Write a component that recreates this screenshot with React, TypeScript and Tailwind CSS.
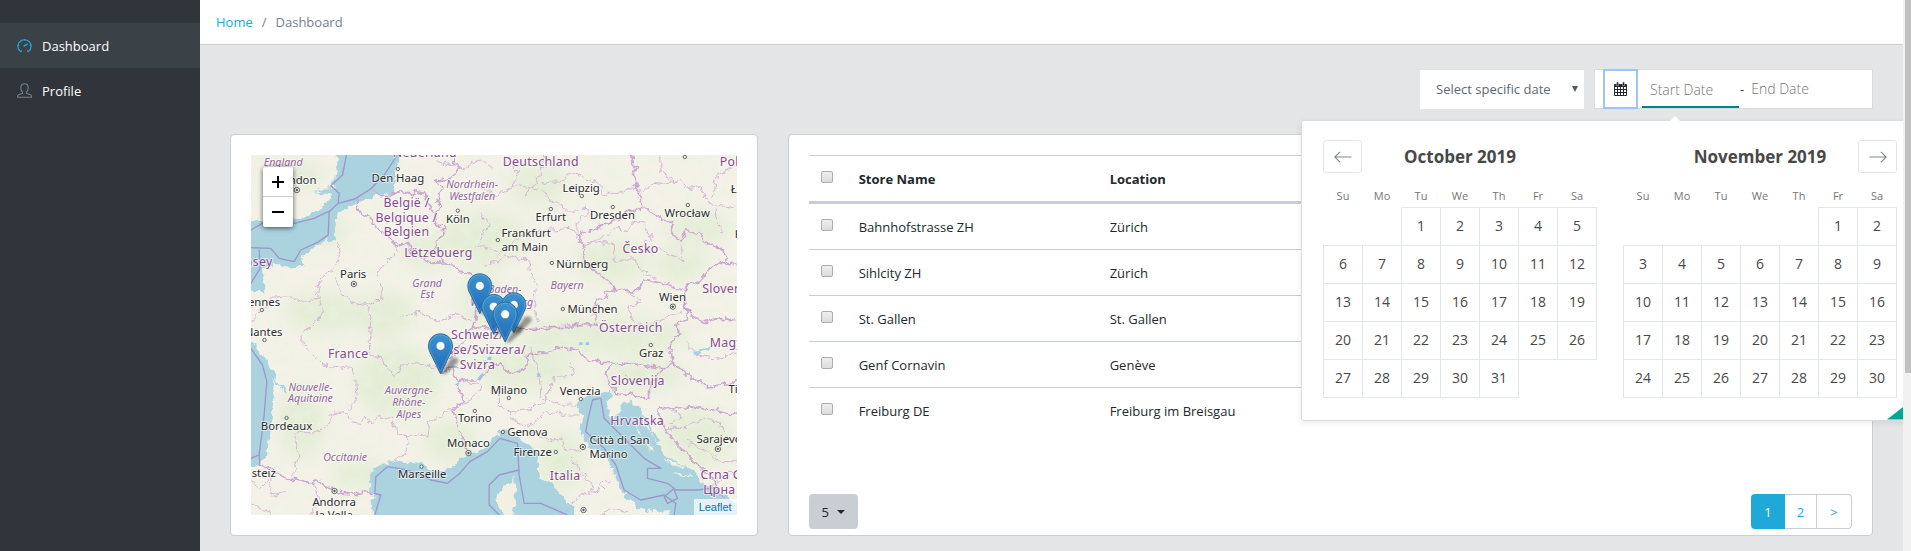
import React from "react";

type Kind = "country" | "region" | "city";
type Anchor = "start" | "middle" | "end";
type Label = [string, number, number, Kind, Anchor?];

const labels: Label[] = [
  ["Nederland", 522, 5, "country"],
  ["England", 97, 33, "region"],
  ["London", 197, 87, "city", "end"],
  ["Den Haag", 441, 80, "city"],
  ["Nordrhein-", 664, 100, "region"],
  ["Westfalen", 664, 135, "region"],
  ["België /", 467, 155, "country"],
  ["Belgique /", 467, 200, "country"],
  ["Belgien", 467, 243, "country"],
  ["Lëtzebuerg", 563, 307, "country"],
  ["Köln", 621, 204, "city"],
  ["Paris", 307, 369, "city"],
  ["Guernsey", 65, 332, "country", "end"],
  ["Rennes", 88, 453, "city", "end"],
  ["Grand", 529, 395, "region"],
  ["Est", 529, 430, "region"],
  ["Nantes", 95, 543, "city", "end"],
  ["Deutschland", 870, 32, "country"],
  ["Polska", 1407, 32, "country", "start"],
  ["Leipzig", 991, 112, "city"],
  ["Erfurt", 900, 197, "city"],
  ["Dresden", 1085, 192, "city"],
  ["Wrocław", 1309, 185, "city"],
  ["Łódź", 1440, 113, "city", "start"],
  ["Katowice", 1452, 248, "city", "start"],
  ["Frankfurt", 752, 247, "city", "start"],
  ["am Main", 752, 287, "city", "start"],
  ["Česko", 1169, 295, "country"],
  ["Nürnberg", 916, 338, "city", "start"],
  ["Bayern", 949, 401, "region"],
  ["Baden-", 762, 415, "region"],
  ["Württemberg", 847, 453, "region", "end"],
  ["München", 950, 474, "city", "start"],
  ["Wien", 1265, 437, "city"],
  ["Slovensko", 1354, 413, "country", "start"],
  ["Österreich", 1140, 532, "country"],
  ["France", 292, 610, "country"],
  ["Nouvelle-", 179, 707, "region"],
  ["Aquitaine", 179, 742, "region"],
  ["Bordeaux", 107, 825, "city"],
  ["Auvergne-", 474, 717, "region"],
  ["Rhône-", 474, 753, "region"],
  ["Alpes", 474, 788, "region"],
  ["Schweiz/", 680, 552, "country"],
  ["Suisse/Svizzera/", 825, 597, "country", "end"],
  ["Svizra", 680, 642, "country"],
  ["Torino", 672, 801, "city"],
  ["Monaco", 653, 875, "city"],
  ["Marseille", 514, 970, "city"],
  ["Occitanie", 283, 917, "region"],
  ["Andorra", 250, 1053, "city"],
  ["la Vella", 250, 1091, "city"],
  ["Vitoria-Gasteiz", 75, 965, "city", "end"],
  ["Milano", 774, 717, "city"],
  ["Venezia", 988, 719, "city"],
  ["Graz", 1201, 605, "city"],
  ["Magyarország", 1377, 575, "country", "start"],
  ["Timișoara", 1433, 713, "city", "start"],
  ["Slovenija", 1161, 691, "country"],
  ["Hrvatska", 1159, 811, "country"],
  ["Genova", 769, 843, "city", "start"],
  ["Firenze", 903, 902, "city", "end"],
  ["Città di San", 1016, 866, "city", "start"],
  ["Marino", 1016, 908, "city", "start"],
  ["Sarajevo", 1337, 864, "city", "start"],
  ["Italia", 943, 975, "country"],
  ["Crna Gora", 1349, 972, "country", "start"],
  ["Црна Гора", 1357, 1017, "country", "start"],
];

const labelStyle: Record<Kind, string> = {
  country: "fill-[#844a8c] text-[37px] tracking-wide",
  region: "fill-[#93659a] text-[32px] italic",
  city: "fill-[#2b2b2b] text-[34px]",
};

const towns: [number, number][] = [
  [441, 42], [621, 167], [33, 465], [41, 555], [993, 123], [900, 162], [1086, 156],
  [1311, 150], [741, 255], [903, 324], [936, 462], [107, 789], [672, 768], [512, 935],
  [774, 729], [990, 732], [1200, 570], [756, 831], [915, 891], [1302, 6],
];

const capitals: [number, number][] = [
  [138, 105], [309, 387], [1266, 455], [653, 894], [251, 1008], [996, 876], [1401, 882], [998, 1065],
];

const pins: [number, number][] = [[687, 475], [729, 537], [789, 532], [763, 560], [569, 655]];

const seas = [
  "M264 -20 257 45 242 85 257 98 187 103 215 110 187 114 245 118 240 130 207 165 157 187 77 195 -20 200V410L44 412 37 375 37 340 72 330 100 332 122 340 152 335 165 327 155 315 155 300 207 270 252 250 257 170 307 150 362 130 390 118 432 112 437 45 455 -20Z",
  "M-20 540 37 600 67 650 70 690 65 760 60 830 40 920 27 932 -20 930Z",
  "M372 1100 359 1045 372 1020 355 1010 355 980 367 945 422 915 467 925 500 925 547 945 597 945 627 910 657 900 707 875 747 827 777 832 827 865 855 890 862 925 867 965 917 1000 962 1055 977 1100Z",
  "M1047 725 997 725 979 740 979 755 997 785 985 815 992 835 1017 875 1062 895 1082 935 1102 995 1157 1055 1217 1070 1252 1065 1262 1100 1480 1100V1060L1397 1000 1357 985 1337 955 1247 905 1217 865 1177 805 1147 750 1117 740 1092 785 1077 780 1067 740 1087 720 1077 705Z",
];

const greens: [number, number, number, number][] = [
  [130, 60, 90, 40], [700, 250, 130, 80], [860, 90, 90, 60], [520, 290, 70, 50], [690, 430, 60, 80],
  [1080, 320, 110, 60], [1290, 330, 80, 50], [1060, 540, 260, 55], [440, 680, 130, 110], [600, 860, 80, 60],
  [150, 800, 70, 110], [330, 960, 90, 40], [220, 470, 120, 60], [1180, 660, 120, 50], [1330, 850, 110, 90],
  [930, 920, 70, 90], [1340, 220, 100, 50], [820, 640, 150, 60], [400, 480, 90, 70], [240, 230, 50, 40],
];

const countryBorders =
  "M314 130 325 165 337 185 360 188 377 215 402 235 427 265 445 272 467 260 480 290 507 305 540 322 557 320 585 325 607 330 625 350 662 360 672 390 690 420 680 450 675 490 662 520" +
  "M362 100 380 120 407 125 430 112 452 110 480 118 500 110 517 115 530 140 547 165" +
  "M607 0 612 25 627 35 600 70 557 75 570 100 560 125 567 155 547 185 555 205 577 215 580 235 562 255 547 285 577 320" +
  "M1142 0 1145 20 1158 35 1148 60 1152 75 1160 105 1172 125 1168 170" +
  "M1172 160 1145 168 1127 160 1110 190 1087 195 1060 215 1017 225 979 240 985 262 1002 275 995 300 1002 315 1030 345 1057 365 1075 380 1092 400 1120 408 1147 415 1160 400 1177 375 1205 380 1237 385 1265 398 1297 405 1320 390 1337 385 1365 350 1387 335 1400 320 1432 325 1425 300 1407 285 1380 270 1357 255 1350 235 1307 225 1300 240 1292 255 1270 240 1257 215 1265 200 1235 195 1207 175 1190 160ZM1432 325 1458 330" +
  "M1092 400 1067 415 1067 425 1040 440 1027 475 1037 515 997 505 950 515 905 515 857 523 800 522 750 525 710 515 662 520 640 560 612 590 600 610 567 655 590 648 607 635 617 680 650 675 687 675 705 655 722 640 745 620 777 655 800 650 827 640 830 600 857 595 887 595" +
  "M1297 405 1300 430 1307 455 1325 485 1357 500 1410 490 1458 497M1307 455 1310 490 1272 510 1285 530 1257 575 1267 620 1240 640 1207 635 1150 630 1087 625 1007 615 972 585 930 575 887 595" +
  "M1087 625 1067 655 1075 680 1090 700 1092 715 1110 722 1147 715 1165 730 1197 725 1195 700 1207 675 1230 650 1267 620 1290 640 1317 665 1345 680 1377 695 1420 688 1458 680" +
  "M1222 790 1227 755 1270 765 1317 755 1360 765 1397 760 1440 780 1458 775M1222 780 1240 820 1277 865 1317 905 1357 945 1390 980 1417 1025" +
  "M612 685 637 725 637 735 607 765 615 800 622 825 652 890M27 930 60 945 107 970 150 975 192 990 192 975 225 990 252 1005 280 1018 307 1020 335 1012 362 1015";

const regionBorders =
  "M257 260 270 280 262 310 252 340 220 365 205 390 200 430 160 440 120 425 60 430 20 480 0 500M252 370 265 400 300 440 350 450 390 430 392 390 377 360 400 330 440 290 430 270" +
  "M205 425 215 470 190 510 150 540 155 570 190 600 220 630 300 640 315 690 320 730 290 775 245 775 220 820 190 830 132 830 132 850 147 900 130 940 128 975M350 450 360 500 355 560 358 600 385 605 410 640 425 660 440 655 455 630 520 625 560 640 567 655M450 480 520 470 560 500 620 480 660 500" +
  "M290 775 300 800 330 805 345 780 360 805 385 785 420 790 440 830 465 840 475 860 465 890 430 915M475 845 500 835 530 850 535 820 525 800 560 790 590 765 605 765M0 980 30 1000 60 970 60 1020 100 1010M0 1050 40 1060 55 1080M192 990 205 1040 180 1080" +
  "M690 100 740 120 790 90 800 50 770 20M790 90 850 100 870 50 880 0M820 120 845 100 880 110 900 135 930 150 945 165 985 165 1007 155 1005 180 980 200 978 230M870 80 920 85 960 55 1000 70 1050 90 1050 115 1100 115 1130 100 1170 105M700 330 740 320 760 300 790 310 830 310 835 350 860 380 850 440 860 500M560 20 640 40 690 10 720 40M691 168 715 210 680 270 740 290M740 300 780 270 840 230 905 225 960 220 979 240" +
  "M1230 0 1230 50 1270 80 1200 90 1160 120M1270 80 1290 75 1310 100 1350 95 1360 130 1400 150 1390 180 1410 230M1400 150 1458 160M1385 130 1400 60 1458 30" +
  "M990 275 1050 250 1090 220 1130 230 1150 200 1180 200 1200 245 1160 290M1010 260 1087 265 1090 315 1160 315 1165 345 1210 370M1200 270 1260 300 1300 320 1290 270" +
  "M1137 420 1170 440 1130 460 1150 500 1190 510 1240 490 1290 470M960 620 970 660 910 665 900 690 880 740 830 765 780 770 740 750 740 720M980 750 930 750 875 730 870 690 840 580M780 770 785 800 850 810 880 770 955 780 985 780M830 830 900 860 930 850 945 880 990 890M965 910 1000 960 1030 1010 1060 980 1085 980M930 1080 990 1020 1060 1000M1050 1080 1080 1060 1130 1070" +
  "M1230 760 1290 780 1250 820 1300 820 1360 790 1400 800 1420 830M1310 860 1350 880 1410 920 1458 920M1377 1000 1430 950 1458 955M622 750 680 720 690 690 640 680M1120 660 1160 690M1300 560 1340 600 1400 610 1458 590";

const seaBorders =
  "M287 0 275 60 240 92 265 115 262 145 312 132 362 100 400 60 440 0M262 145 235 170 232 240 200 262 150 285 130 320 85 310 60 280 0 278M232 170 190 190 130 205 60 190 0 225M25 285 28 340 0 385" +
  "M0 580 35 630 48 680 40 780 25 900 0 910M25 890 27 930M372 1080 390 1020 372 1015 375 965 410 935 470 945 540 975 590 985 627 955 657 920 710 890 747 850 800 865 805 960 820 1045 870 1045 950 1080" +
  "M745 1080 715 1050 715 990 745 960 805 945M1047 730 1025 735 1010 800 1005 830 1060 880 1095 930 1120 1005 1170 1035 1240 1020 1275 1045 1270 1080M1050 730 1060 790 1120 850 1180 910 1230 940 1190 940 1190 970 1250 985 1270 1000 1240 1025 1250 1045 1280 1030 1270 1005 1340 1005 1380 1000";

function Pin({ x, y }: { x: number; y: number }) {
  return (
    <g transform={`translate(${x - 37.5} ${y - 120}) scale(3)`}>
      <path d="M13 40 23 25C29 22 33 27 28 31L17 41Z" fill="#000" opacity=".38" filter="url(#pin-shadow)" />
      <path
        d="M12.5.5C5.8.5.5 5.9.5 12.6c0 3.1 1 5.4 2.4 8.1L12.5 40.4l9.6-19.7c1.4-2.7 2.4-5 2.4-8.1C24.500 5.900 19.200.5 12.500.5Z"
        fill="url(#pin-fill)"
        stroke="#2e6c97"
      />
      <path d="M12.500 1.600c-6 0-10.900 4.900-10.900 11 0 2.900.9 5.100 2.200 7.600l8.700 17.700 8.700-17.700c1.300-2.500 2.200-4.700 2.200-7.600 0-6.100-4.900-11-10.900-11Z" fill="none" stroke="#fff" strokeOpacity=".18" />
      <circle cx="12.500" cy="12.600" r="4.400" fill="#fff" stroke="#2874ad" strokeWidth=".6" />
    </g>
  );
}

function StoreMap() {
  return (
    <div className="relative h-[360px] overflow-hidden bg-[#f1f0e3]">
      <svg viewBox="0 0 1458 1080" preserveAspectRatio="xMidYMid slice" className="h-full w-full font-['Noto_Sans',sans-serif]" role="img" aria-label="Map of stores">
        <defs>
          <linearGradient id="pin-fill" x1="0" y1="0" x2="0" y2="1">
            <stop offset="0" stopColor="#3c92cf" />
            <stop offset="1" stopColor="#1c6cb8" />
          </linearGradient>
          <filter id="pin-shadow" x="-50%" y="-50%" width="200%" height="200%">
            <feGaussianBlur stdDeviation="1.4" />
          </filter>
          <filter id="soft" x="-50%" y="-50%" width="200%" height="200%">
            <feGaussianBlur stdDeviation="24" />
          </filter>
          <filter id="terrain" x="0" y="0" width="100%" height="100%">
            <feTurbulence type="fractalNoise" baseFrequency=".03" numOctaves="5" seed="8" />
            <feColorMatrix values="0 0 0 0 .8 0 0 0 0 .9 0 0 0 0 .74 2.400 0 0 0 -.95" />
          </filter>
          <filter id="rugged" filterUnits="userSpaceOnUse" x="0" y="0" width="1458" height="1080">
            <feTurbulence type="fractalNoise" baseFrequency=".045" numOctaves="3" seed="3" />
            <feDisplacementMap in="SourceGraphic" scale="26" xChannelSelector="R" yChannelSelector="G" />
          </filter>
        </defs>
        <rect width="1458" height="1080" fill="#f4f1e8" />
        <g fill="#dbeaca" opacity=".6" filter="url(#soft)">
          {greens.map(([x, y, rx, ry], i) => (
            <ellipse key={i} cx={x} cy={y} rx={rx} ry={ry} />
          ))}
        </g>
        <rect width="1458" height="1080" filter="url(#terrain)" opacity=".5" />
        <g fill="#aad3df" filter="url(#rugged)">
          {seas.map((d) => (
            <path key={d} d={d} />
          ))}
          <path d="M380 98 400 85 432 100 425 118 395 115Z" />
          <g fill="#f1f0e3">
            <path d="M792 960 789 990 762 995 735 1015 740 1050 757 1080 785 1080 797 1015Z" />
            <path d="M1240 915 1300 935 1290 940 1245 925ZM1260 950 1320 962 1330 970 1270 958ZM1150 800 1175 840 1165 838ZM1180 855 1210 890 1200 888Z" />
          </g>
          <g fill="none" stroke="#aad3df">
            <path d="M60 640 80 685 95 700 102 715" strokeWidth="6" />
            <path d="M1325 600 1350 590 1385 575" strokeWidth="7" />
            <path d="M1120 745 1180 790 1220 860M1140 740 1165 775" strokeWidth="9" />
          </g>
        </g>
        <g fill="#8fc8f5">
          <path d="M590 640q18-18 40 2q-20-8-40-2ZM680 670l14-16 5 6-12 18ZM612 688l14-6-4 10ZM640 678l10-8 2 8ZM985 562h10v8h-10ZM1005 562h10v8h-10ZM872 588h10v8h-10ZM860 655h8v10h-8ZM710 605h12v10h-12ZM697 620l8-6v14Z" />
        </g>
        <g fill="none" strokeLinejoin="round" strokeLinecap="round">
          <path d={regionBorders} stroke="#d2afd4" strokeWidth="3" opacity=".9" filter="url(#rugged)" />
          <path d={countryBorders} stroke="#cba6d0" strokeWidth="5" filter="url(#rugged)" />
          <path d={seaBorders} stroke="#9a8cc8" strokeWidth="4" opacity=".85" />
        </g>
        <g fill="#fff" stroke="#444" strokeWidth="2.500">
          {towns.map(([x, y]) => (
            <circle key={`${x}-${y}`} cx={x} cy={y} r="5" />
          ))}
          {capitals.map(([x, y]) => (
            <g key={`${x}-${y}`}>
              <circle cx={x} cy={y} r="8" />
              <circle cx={x} cy={y} r="2.500" fill="#444" />
            </g>
          ))}
        </g>
        <g stroke="#ffffff" strokeOpacity=".6" strokeWidth="6" strokeLinejoin="round" paintOrder="stroke">
          {labels.map(([text, x, y, kind, anchor = "middle"]) => (
            <text key={text} x={x} y={y} textAnchor={anchor} className={labelStyle[kind]}>
              {text}
            </text>
          ))}
        </g>
        {pins.map(([x, y]) => (
          <Pin key={`${x}-${y}`} x={x} y={y} />
        ))}
      </svg>
      <div className="absolute left-3 top-3 flex w-[30px] flex-col divide-y divide-[#cccccc] rounded-[2px] bg-white shadow-[0_1px_5px_rgba(0,0,0,0.65)]">
        <button aria-label="Zoom in" className="flex h-[30px] items-center justify-center">
          <svg viewBox="0 0 12 12" className="size-3" stroke="#000" strokeWidth="2"><path d="M0 6h12M6 0v12" /></svg>
        </button>
        <button aria-label="Zoom out" className="flex h-[30px] items-center justify-center">
          <svg viewBox="0 0 12 12" className="size-3" stroke="#000" strokeWidth="2"><path d="M0 6h12" /></svg>
        </button>
      </div>
      <a href="#leaflet" className="absolute bottom-0 right-0 bg-white/70 px-[5px] font-['Liberation_Sans',sans-serif] text-[11px] leading-4 text-[#0078a8]">
        Leaflet
      </a>
    </div>
  );
}

const stores = [
  ["Bahnhofstrasse ZH", "Zürich"],
  ["Sihlcity ZH", "Zürich"],
  ["St. Gallen", "St. Gallen"],
  ["Genf Cornavin", "Genève"],
  ["Freiburg DE", "Freiburg im Breisgau"],
];

function Check({ label }: { label: string }) {
  return (
    <input
      type="checkbox"
      aria-label={label}
      className="mb-1 block size-3 appearance-none rounded-[2px] border border-[#adadad] bg-linear-to-b from-[#eeeeee] to-[#dcdcdc] checked:bg-[#20a8d8]"
    />
  );
}

function StoreTable() {
  return (
    <table className="w-full table-fixed border-separate border-spacing-0 text-left text-[#23282c]">
      <thead>
        <tr className="h-[49px] [&>th]:border-b-[3px] [&>th]:border-t [&>th]:border-b-[#c8ced3] [&>th]:border-t-[#c8ced3] [&>th]:px-3">
          <th className="w-[38px]"><Check label="Select all stores" /></th>
          <th className="w-[251px] font-bold">Store Name</th>
          <th className="font-bold">Location</th>
        </tr>
      </thead>
      <tbody>
        {stores.map(([name, place], i) => (
          <tr key={name} className={i === 0 ? "h-[45px] [&>td]:px-3" : "h-[46px] [&>td]:border-t [&>td]:border-[#c8ced3] [&>td]:px-3"}>
            <td><Check label={`Select ${name}`} /></td>
            <td>{name}</td>
            <td>{place}</td>
          </tr>
        ))}
      </tbody>
    </table>
  );
}

const weekdays = ["Su", "Mo", "Tu", "We", "Th", "Fr", "Sa"];

function NavArrow({ back }: { back?: boolean }) {
  return (
    <button
      aria-label={back ? "Previous month" : "Next month"}
      className={"flex h-[33px] w-[39px] items-center justify-center rounded-[3px] border border-[#e4e7e7] bg-white " + (back ? "col-start-1" : "col-start-3")}
    >
      <svg viewBox="0 0 18 12" className={back ? "h-3 w-[18px]" : "h-3 w-[18px] rotate-180"} fill="none" stroke="#82888a" strokeWidth="1.200">
        <path d="M17.500 6H1M6 .8.8 6 6 11.200" />
      </svg>
    </button>
  );
}

function Month({ title, offset, days, nav }: { title: string; offset: number; days: number; nav: "prev" | "next" }) {
  const weeks = Array.from({ length: Math.ceil((offset + days) / 7) }, (_, w) =>
    Array.from({ length: 7 }, (_, d) => w * 7 + d - offset + 1),
  );
  return (
    <section className="w-[274px] shrink-0">
      <div className="grid h-8 grid-cols-[39px_1fr_39px] items-center text-[#484848]">
        {nav === "prev" && <NavArrow back />}
        <h2 className="col-start-2 row-start-1 text-center text-[17px] font-bold">{title}</h2>
        {nav === "next" && <NavArrow />}
      </div>
      <table className="w-full table-fixed border-collapse text-center text-[#484848]">
        <thead>
          <tr className="h-[35px]">
            {weekdays.map((d) => (
              <th key={d} className="pb-[3px] align-bottom text-[11px] font-normal leading-4 text-[#757575]">{d}</th>
            ))}
          </tr>
        </thead>
        <tbody>
          {weeks.map((week, w) => (
            <tr key={w} className="h-[38px]">
              {week.map((n) =>
                n > 0 && n <= days ? (
                  <td key={n} className="border border-[#e4e7e7] p-0">
                    <button className="h-full w-full text-sm">{n}</button>
                  </td>
                ) : (
                  <td key={n} className="p-0" />
                ),
              )}
            </tr>
          ))}
        </tbody>
      </table>
    </section>
  );
}

function DatePopup() {
  return (
    <div className="absolute -left-[294px] top-[50px] z-10 flex w-[620px] gap-[26px] rounded-[3px] border border-[#dcdcdc] bg-white px-[21px] pb-[22px] pt-[19px] shadow-[0_2px_6px_rgba(0,0,0,0.08)]">
      <svg viewBox="0 0 12 6" className="absolute -top-[5px] left-[367px] h-[6px] w-3"><path d="M0 6 6 0l6 6Z" fill="#fff" /></svg>
      <Month title="October 2019" offset={2} days={31} nav="prev" />
      <Month title="November 2019" offset={5} days={30} nav="next" />
      <button aria-label="Keyboard shortcuts" className="absolute bottom-0 right-0 h-[26px] w-[33px] bg-[#00a699] [clip-path:polygon(100%_0,100%_100%,0_100%)]" />
    </div>
  );
}

function Filters() {
  return (
    <div className="flex h-10 items-stretch justify-end gap-[10px]">
      <div className="relative my-auto h-[39px] w-[164px]">
        <select aria-label="Select specific date" className="h-full w-full appearance-none bg-white pl-4 pr-6 text-[#5c6873]">
          <option>Select specific date</option>
        </select>
        <svg viewBox="0 0 6 6" className="pointer-events-none absolute right-[6px] top-4 size-[6px]"><path d="M0 0h6L3 6Z" fill="#4f5a63" /></svg>
      </div>
      <div className="relative flex w-[279px] items-center border border-[#dbdbdb] bg-white">
        <button aria-label="Open calendar" className="-my-px ml-2 flex h-10 w-[35px] shrink-0 items-center justify-center border-2 border-[#a1c3fb] text-sm text-[#23282c]">
          <CalendarIcon />
        </button>
        <input aria-label="Start date" placeholder="Start Date" className="ml-1 mt-[2px] h-9 w-[97px] border-b-2 border-[#008489] pl-2 text-sm font-light outline-none placeholder:text-[#757575]" />
        <span className="px-[1px] text-[#484848]">-</span>
        <input aria-label="End date" placeholder="End Date" className="w-[97px] pl-[6px] text-sm font-light outline-none placeholder:text-[#757575]" />
        <DatePopup />
      </div>
    </div>
  );
}

function CalendarIcon() {
  return (
    <svg viewBox="0 0 13 14" className="h-[14px] w-[13px]">
      <path d="M1 2h11a1 1 0 0 1 1 1v10a1 1 0 0 1-1 1H1a1 1 0 0 1-1-1V3a1 1 0 0 1 1-1Z" fill="#23282c" />
      <path d="M2.500 0h2v3.500h-2ZM8.500 0h2v3.500h-2Z" fill="#23282c" stroke="#fff" strokeWidth=".4" />
      <path d="M1 5h2v2H1ZM4 5h2v2H4ZM7 5h2v2H7ZM10 5h2v2h-2ZM1 8h2v2H1ZM4 8h2v2H4ZM7 8h2v2H7ZM10 8h2v2h-2ZM1 11h2v2H1ZM4 11h2v2H4ZM7 11h2v2H7ZM10 11h2v2h-2Z" fill="#fff" />
    </svg>
  );
}

function Sidebar() {
  return (
    <nav className="w-[200px] shrink-0 bg-[#2f353a] pt-[23px] text-white">
      <a href="#dashboard" className="flex h-[45px] items-center gap-[10px] bg-[#3a4248] pl-[17px]">
        <svg viewBox="0 0 15 15" className="size-[15px]" fill="none" stroke="#20a8d8" strokeWidth="1.200">
          <path d="M3.800 13.800A6.600 6.600 0 1 1 11.200 13.800M3.800 13.800 4.800 12.500M11.200 13.800 10.200 12.500M7.500 1v1.800M1 7.500h1.500M12.500 7.500H14M3 3l1 1" />
          <path d="M6.500 8.300 10.500 5.800" strokeWidth="1.400" />
        </svg>
        Dashboard
      </a>
      <a href="#profile" className="flex h-[45px] items-center gap-[10px] pl-[17px]">
        <svg viewBox="0 0 15 15" className="size-[15px]" fill="none" stroke="#73818f" strokeWidth="1.100">
          <path d="M5.500 9.200C4.200 8 3.800 6.500 3.800 4.700 3.800 2.300 5.300.8 7.500.8s3.700 1.500 3.700 3.900c0 1.800-.4 3.300-1.700 4.500v1.200l4 1.300c.6.200.9.700.9 1.300v1.200H.6V13c0-.6.3-1.100.9-1.300l4-1.300Z" />
        </svg>
        Profile
      </a>
    </nav>
  );
}

export default function App() {
  return (
    <div className="flex h-screen overflow-hidden bg-[#e4e5e6] font-['Open_Sans','Noto_Sans',sans-serif] text-[13px] leading-5">
      <Sidebar />
      <main className="min-w-0 flex-1 overflow-hidden">
        <header className="flex h-[45px] items-center gap-[9px] border-b border-[#c8ced3] bg-white px-4 text-[#73818f]">
          <a href="#home" className="text-[#20a8d8]">Home</a>
          <span>/</span>
          <span>Dashboard</span>
        </header>
        <div className="flex flex-col gap-[25px] px-[30px] pt-6">
          <Filters />
          <div className="grid grid-cols-3 gap-[30px]">
            <section className="rounded border border-[#c8ced3] bg-white p-5">
              <StoreMap />
            </section>
            <section className="col-span-2 flex flex-col justify-between rounded border border-[#c8ced3] bg-white px-5 pb-[6px] pt-5">
              <StoreTable />
              <div className="flex items-center justify-between">
                <button className="flex h-[35px] w-[49px] items-center justify-center gap-2 rounded bg-[#c8ced3] text-[#23282c]">
                  5
                  <svg viewBox="0 0 8 4" className="h-1 w-2"><path d="M0 0h8L4 4Z" fill="#23282c" /></svg>
                </button>
                <div className="flex h-[35px] text-[#20a8d8]">
                  <a href="#page-1" className="flex w-[34px] items-center justify-center rounded-l bg-[#20a8d8] text-white">1</a>
                  <a href="#page-2" className="flex w-8 items-center justify-center border-y border-r border-[#c8ced3]">2</a>
                  <a href="#next" className="flex w-[35px] items-center justify-center rounded-r border-y border-r border-[#c8ced3]">&gt;</a>
                </div>
              </div>
            </section>
          </div>
        </div>
      </main>
      <div className="flex w-2 shrink-0 flex-col bg-[#f1f1f1] pl-[2px]" aria-hidden="true">
        <div className="h-[373px] bg-[#c1c1c1]" />
      </div>
    </div>
  );
}
